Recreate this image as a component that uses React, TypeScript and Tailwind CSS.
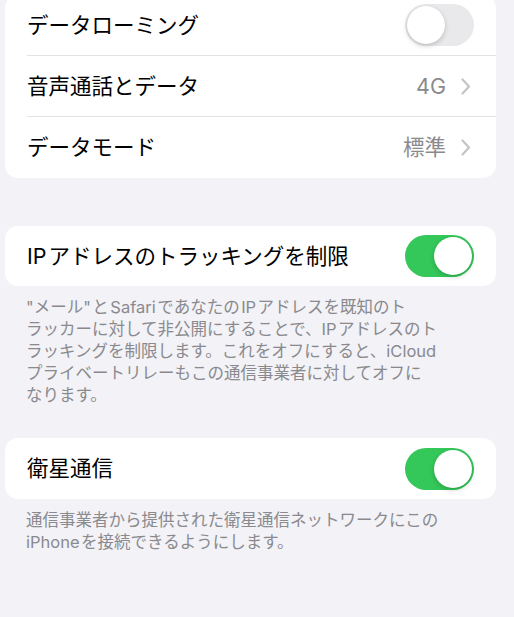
import type { ReactNode } from 'react'

function Toggle({ on }: { on: boolean }) {
    return (
        <div
            className={`flex h-[42px] w-[69px] shrink-0 items-center rounded-full p-[2px] ${
                on ? 'justify-end bg-[#34c759]' : 'justify-start bg-[#e9e9eb]'
            }`}
        >
            <div className="h-[38px] w-[38px] rounded-full bg-white shadow-[0_2px_5px_rgba(0,0,0,0.18),0_0_1px_rgba(0,0,0,0.1)]" />
        </div>
    )
}

function Chevron() {
    return (
        <svg width="10" height="17" viewBox="0 0 10 17" fill="none">
            <path
                d="M1.5 1.5L8 8.5L1.5 15.5"
                stroke="#c4c4c7"
                strokeWidth="2.2"
                strokeLinecap="round"
                strokeLinejoin="round"
            />
        </svg>
    )
}

function Row({
    label,
    right,
    last,
    h = 'h-[61px]',
}: {
    label: string
    right: ReactNode
    last?: boolean
    h?: string
}) {
    return (
        <div className="flex pl-[22px]">
            <div
                className={`flex flex-1 items-center justify-between pr-[22px] ${h} ${
                    last ? '' : 'border-b border-[#e2e2e4]'
                }`}
            >
                <span className="text-[21.5px] text-black">{label}</span>
                {right}
            </div>
        </div>
    )
}

function Value({ text }: { text: string }) {
    return (
        <div className="flex items-center gap-[15px] pr-[3px]">
            <span className="text-[21.5px] text-[#8a8a8e]">{text}</span>
            <Chevron />
        </div>
    )
}

export default function App() {
    return (
        <div className="h-[617px] overflow-hidden bg-[#f2f2f7] font-['Inter','Noto_Sans_CJK_JP',sans-serif]">
            <div className="-mt-[5px] ml-[5px] w-[491px] rounded-[13px] bg-white">
                <Row label="データローミング" right={<Toggle on={false} />} />
                <Row label="音声通話とデータ" right={<Value text="4G" />} />
                <Row label="データモード" right={<Value text="標準" />} last />
            </div>

            <div className="ml-[5px] mt-[48px] w-[491px] rounded-[13px] bg-white">
                <Row
                    label="IP&#8202;アドレスのトラッキングを制限"
                    right={<Toggle on />}
                    h="h-[60px]"
                    last
                />
            </div>
            <p className="pl-[26px] pt-[10px] text-[16.5px] leading-[22px] text-[#8a8a8e] whitespace-nowrap">
                "メール"&#8202;と&#8202;Safari&#8202;であなたの&#8202;IP&#8202;アドレスを既知のト
                <br />
                ラッカーに対して非公開にすることで、IP&#8202;アドレスのト
                <br />
                ラッキングを制限します。これをオフにすると、iCloud
                <br />
                プライベートリレーもこの通信事業者に対してオフに
                <br />
                なります。
            </p>

            <div className="ml-[5px] mt-[32px] w-[491px] rounded-[13px] bg-white">
                <Row label="衛星通信" right={<Toggle on />} last />
            </div>
            <p className="pl-[26px] pt-[10px] text-[16.5px] leading-[22px] text-[#8a8a8e] whitespace-nowrap">
                通信事業者から提供された衛星通信ネットワークにこの
                <br />
                iPhone&#8202;を接続できるようにします。
            </p>
        </div>
    )
}
